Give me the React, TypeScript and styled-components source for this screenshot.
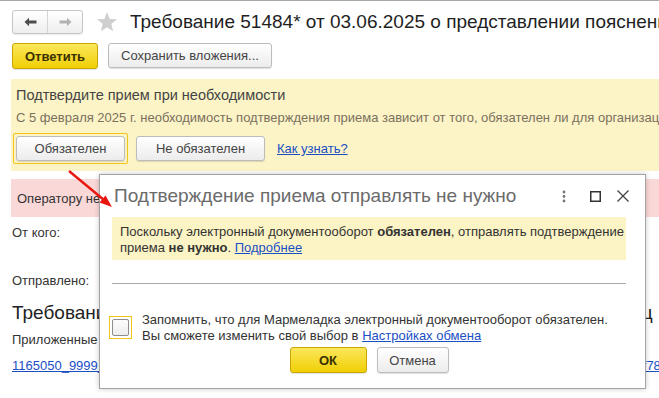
import React from "react";
import styled, { createGlobalStyle } from "styled-components";

const Global = createGlobalStyle`
  html, body { margin: 0; padding: 0; background: #fff; }
  body { width: 659px; height: 398px; overflow: hidden; font-family: "Liberation Sans", Arial, sans-serif; color: #333; }
  * { box-sizing: border-box; }
`;

const Page = styled.div`
  position: relative;
  width: 659px;
  height: 398px;
  overflow: hidden;
  border-top: 1px solid #a8a8a8;
  display: flex;
  flex-direction: column;
`;

const Header = styled.div`
  display: flex;
  align-items: center;
  padding: 8px 0 0 12px;
  height: 33px;
  white-space: nowrap;
`;

const NavGroup = styled.div`
  flex-shrink: 0;
  display: flex;
  width: 71px;
  height: 24px;
  border: 1px solid #c6c6c6;
  border-radius: 3px;
  background: linear-gradient(#ffffff, #eeeeee);
  box-shadow: 0 1px 1px rgba(0, 0, 0, 0.08);
`;

const NavBtn = styled.div<{ $divider?: boolean }>`
  flex: 1;
  display: flex;
  align-items: center;
  justify-content: center;
  border-right: ${(p) => (p.$divider ? "1px solid #d4d4d4" : "none")};
`;

const StarBox = styled.div`
  flex-shrink: 0;
  margin-left: 13px;
  width: 22px;
  height: 22px;
  display: flex;
`;

const Title = styled.div`
  margin-left: 12px;
  font-size: 19px;
  color: #1f1f1f;
  line-height: 24px;
`;

const Toolbar = styled.div`
  display: flex;
  gap: 10px;
  padding: 9px 0 0 12px;
  height: 35px;
`;

const Button = styled.button<{ $primary?: boolean; $w?: number }>`
  flex-shrink: 0;
  height: ${(p) => (p.$primary ? 26 : 25)}px;
  width: ${(p) => (p.$w ? `${p.$w}px` : "auto")};
  padding: 0 8px;
  font-family: "Liberation Sans", Arial, sans-serif;
  font-size: 13px;
  font-weight: ${(p) => (p.$primary ? 700 : 400)};
  color: ${(p) => (p.$primary ? "#3a3000" : "#444")};
  border-radius: 3px;
  border: 1px solid ${(p) => (p.$primary ? "#c9a700" : "#bcbcbc")};
  background: ${(p) =>
    p.$primary ? "linear-gradient(#fbe75a, #f0cf06)" : "linear-gradient(#ffffff, #ececec)"};
  box-shadow: 0 1px 1px rgba(0, 0, 0, 0.12);
  display: flex;
  align-items: center;
  justify-content: center;
  white-space: nowrap;
`;

const Notice = styled.div`
  margin: 10px 0 0 11px;
  height: 92px;
  background: #fcf4c6;
  padding: 7px 0 0 5px;
  white-space: nowrap;
`;

const NoticeTitle = styled.div`
  font-size: 14.5px;
  color: #444;
  line-height: 18px;
`;

const NoticeText = styled.div`
  margin-top: 6px;
  font-size: 13px;
  color: #7a705e;
  line-height: 16px;
`;

const NoticeRow = styled.div`
  display: flex;
  align-items: center;
  gap: 8px;
  margin: 7px 0 0 -3px;
`;

const FocusFrame = styled.div`
  padding: 2px;
  border: 1px solid #f2c318;
  border-radius: 2px;
  display: flex;
`;

const Link = styled.a`
  color: #1a4fc4;
  text-decoration: underline;
  font-size: 13px;
  cursor: pointer;
`;

const ErrorBar = styled.div`
  margin: 8px 0 0 11px;
  height: 38px;
  background: #fbd8d8;
  display: flex;
  align-items: center;
  padding-left: 6px;
  font-size: 13px;
  color: #333;
  white-space: nowrap;
`;

const Field = styled.div<{ $gap: number }>`
  margin: ${(p) => p.$gap}px 0 0 12px;
  font-size: 13px;
  line-height: 16px;
  color: #333;
  white-space: nowrap;
`;

const DocTitle = styled.div`
  margin: 13px 0 0 12px;
  font-size: 19px;
  line-height: 22px;
  color: #222;
  white-space: nowrap;
`;

const Dialog = styled.div`
  position: absolute;
  left: 99px;
  top: 173px;
  width: 547px;
  height: 215px;
  background: #fff;
  border: 1px solid #a3a3a3;
  box-shadow: 0 0 5px rgba(0, 0, 0, 0.22);
  display: flex;
  flex-direction: column;
  padding: 0 19px 0 12px;
`;

const DialogHead = styled.div`
  display: flex;
  align-items: center;
  height: 42px;
  padding-left: 2px;
`;

const DialogTitle = styled.div`
  flex: 1;
  font-size: 19px;
  color: #6b6b6b;
  white-space: nowrap;
`;

const HeadIcons = styled.div`
  display: flex;
  align-items: center;
  margin-right: -10px;
`;

const HeadIcon = styled.div<{ $w: number }>`
  width: ${(p) => p.$w}px;
  height: 20px;
  display: flex;
  align-items: center;
  justify-content: center;
`;

const Message = styled.div`
  height: 43px;
  background: #fcf4c4;
  padding: 7px 0 0 8px;
  font-size: 13px;
  line-height: 16px;
  color: #333;
`;

const Rule = styled.div`
  margin-top: 23px;
  height: 1px;
  background: #a9a9a9;
`;

const CheckRow = styled.div`
  display: flex;
  align-items: flex-start;
  margin: 28px 0 0 -3px;
  gap: 10px;
`;

const CheckFrame = styled.div`
  margin-top: 4px;
  width: 23px;
  height: 23px;
  border: 1px solid #f2c318;
  display: flex;
  align-items: center;
  justify-content: center;
`;

const CheckBox = styled.div`
  width: 17px;
  height: 17px;
  border: 1px solid #8e8e8e;
  border-radius: 2px;
  background: linear-gradient(#fdfdfd, #ededed);
`;

const CheckText = styled.div`
  font-size: 13px;
  line-height: 16px;
  color: #333;
  white-space: nowrap;
`;

const DialogButtons = styled.div`
  display: flex;
  justify-content: center;
  gap: 10px;
  margin-top: 3px;
`;

const Arrow = styled.svg`
  position: absolute;
  left: 0;
  top: 0;
  pointer-events: none;
`;

export default function App() {
  return (
    <>
      <Global />
      <Page>
        <Header>
          <NavGroup>
            <NavBtn $divider>
              <svg width="13" height="10" viewBox="0 0 13 10">
                <path d="M0.5 5 L5 0.8 L5 3.6 L12.5 3.6 L12.5 6.4 L5 6.4 L5 9.2 Z" fill="#4d4d4d" />
              </svg>
            </NavBtn>
            <NavBtn>
              <svg width="13" height="10" viewBox="0 0 13 10">
                <path d="M12.5 5 L8 0.8 L8 3.6 L0.5 3.6 L0.5 6.4 L8 6.4 L8 9.2 Z" fill="#b3b3b3" />
              </svg>
            </NavBtn>
          </NavGroup>
          <StarBox>
            <svg width="22" height="22" viewBox="0 0 24 24">
              <path
                d="M12 1.2 L14.9 8.6 L22.8 9.1 L16.7 14.2 L18.7 22 L12 17.7 L5.3 22 L7.3 14.2 L1.2 9.1 L9.1 8.6 Z"
                fill="#cfcfcf"
              />
            </svg>
          </StarBox>
          <Title>Требование 51484* от 03.06.2025 о представлении пояснений</Title>
        </Header>

        <Toolbar>
          <Button $primary $w={86}>Ответить</Button>
          <Button $w={164}>Сохранить вложения...</Button>
        </Toolbar>

        <Notice>
          <NoticeTitle>Подтвердите прием при необходимости</NoticeTitle>
          <NoticeText>
            С 5 февраля 2025 г. необходимость подтверждения приема зависит от того, обязателен ли для организации
            электронный документооборот
          </NoticeText>
          <NoticeRow>
            <FocusFrame>
              <Button $w={109}>Обязателен</Button>
            </FocusFrame>
            <Button $w={129}>Не обязателен</Button>
            <Link style={{ marginLeft: 4 }}>Как узнать?</Link>
          </NoticeRow>
        </Notice>

        <ErrorBar>Оператору не отправлено подтверждение приема требования</ErrorBar>

        <Field $gap={8}>От кого:</Field>
        <Field $gap={32}>Отправлено:</Field>
        <DocTitle>Требование о представлении пояснений к общей декларации организац</DocTitle>
        <Field $gap={8}>Приложенные файлы:</Field>
        <Field $gap={10}>
          <Link>1165050_9999_ON_TREBOVPOYAS_1165_1165_772777777777222201001_20250603_A1B2C3D4-E5F6-1f78.xml</Link>
        </Field>

        <Dialog>
          <DialogHead>
            <DialogTitle>Подтверждение приема отправлять не нужно</DialogTitle>
            <HeadIcons>
              <HeadIcon $w={36}>
                <svg width="4" height="13" viewBox="0 0 4 13">
                  <circle cx="2" cy="2" r="1.4" fill="#777" />
                  <circle cx="2" cy="6.5" r="1.4" fill="#777" />
                  <circle cx="2" cy="11" r="1.4" fill="#777" />
                </svg>
              </HeadIcon>
              <HeadIcon $w={27}>
                <svg width="11" height="11" viewBox="0 0 11 11">
                  <rect x="0.75" y="0.75" width="9.5" height="9.5" fill="none" stroke="#333" strokeWidth="1.5" />
                </svg>
              </HeadIcon>
              <HeadIcon $w={27}>
                <svg width="12" height="12" viewBox="0 0 12 12">
                  <path d="M0.5 0.5 L11.5 11.5 M11.5 0.5 L0.5 11.5" stroke="#444" strokeWidth="1.3" />
                </svg>
              </HeadIcon>
            </HeadIcons>
          </DialogHead>
          <Message>
            Поскольку электронный документооборот <b>обязателен</b>, отправлять подтверждение
            <br />
            приема <b>не нужно</b>. <Link>Подробнее</Link>
          </Message>
          <Rule />
          <CheckRow>
            <CheckFrame>
              <CheckBox />
            </CheckFrame>
            <CheckText>
              Запомнить, что для Мармеладка электронный документооборот обязателен.
              <br />
              Вы сможете изменить свой выбор в <Link>Настройках обмена</Link>
            </CheckText>
          </CheckRow>
          <DialogButtons>
            <Button $primary $w={77}>ОК</Button>
            <Button $w={72} style={{ height: 26 }}>Отмена</Button>
          </DialogButtons>
        </Dialog>

        <Arrow width="659" height="398" viewBox="0 0 659 398">
          <line x1="69" y1="170" x2="104" y2="199" stroke="#e8170f" strokeWidth="2.4" />
          <path d="M112 206 L99.5 201.5 L105.5 194.5 Z" fill="#e8170f" />
        </Arrow>
      </Page>
    </>
  );
}
